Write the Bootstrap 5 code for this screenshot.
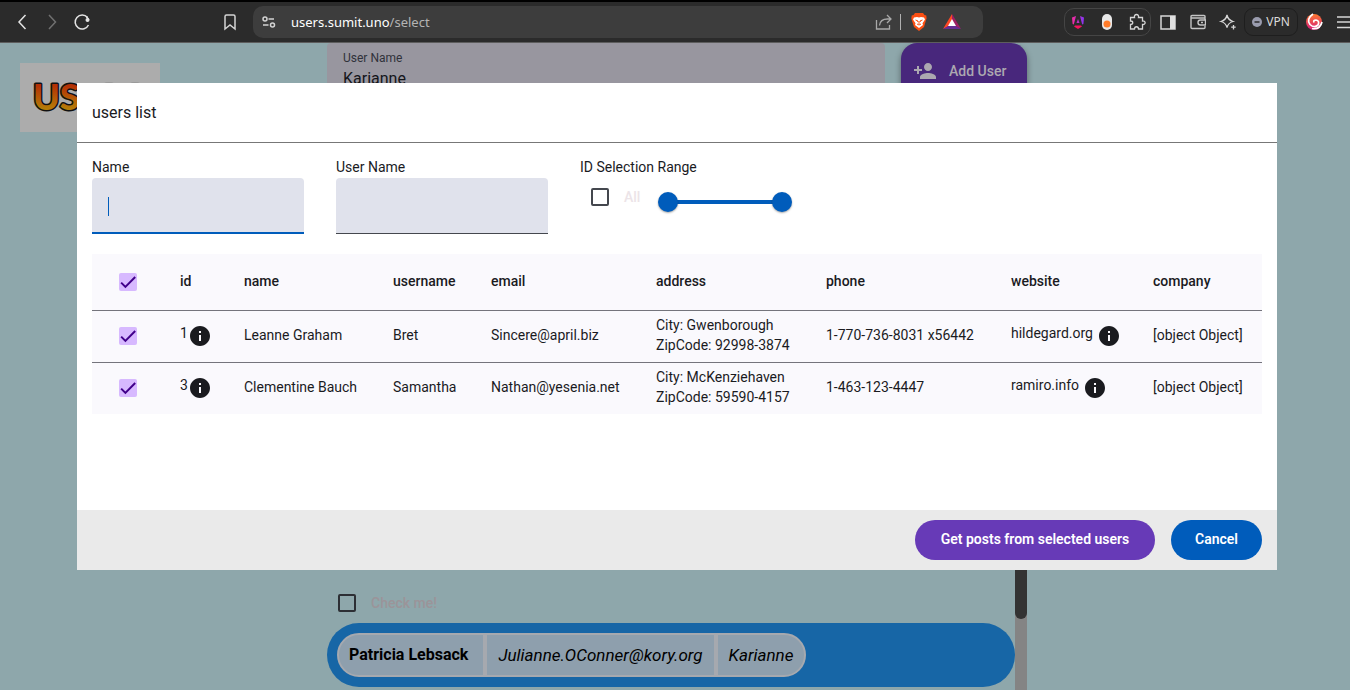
<!DOCTYPE html>
<html lang="en">
<head>
<meta charset="utf-8">
<meta name="viewport" content="width=device-width, initial-scale=1">
<title>users list</title>
<link href="https://cdn.jsdelivr.net/npm/bootstrap@5.3.0/dist/css/bootstrap.min.css" rel="stylesheet">
<style>
  body { font-family: Roboto, "Liberation Sans", sans-serif; font-size: 14px; line-height: 20px; color: #1a1b1f; background: #8ea7ab; }
  svg { display: block; flex: none; }

  /* browser toolbar */
  .toolbar { background: #2b2b2b; border-top: 2px solid #000; border-bottom: 1px solid #5d5d5d; height: 43px; padding-left: 12px; color: #dcdcdc; font-family: "Noto Sans", sans-serif; }
  .tool { border: 0; padding: 0; background: none; color: inherit; flex: none; }
  .bookmark { margin: 0 13px 0 128px; }
  .address { background: #3d3d3d; border-radius: 10px; height: 32px; padding: 0 22px 0 6px; margin-right: 81px; }
  .url { font-size: 13px; color: #b4b4b4; text-decoration: none; }
  .url span { color: #fff; }
  .extensions { border: 1px solid #454545; border-radius: 10px; height: 28px; width: 87px; padding: 0 3px 0 4px; margin-right: 7px; }
  .vpn { border: 1px solid #1e1e1e; border-radius: 9px; height: 28px; width: 54px; font-size: 12px; margin: 0 6px; }
  .menu-btn { margin: 0 -4px 0 8px; }

  /* page behind the dialog */
  .logo-box { width: 140px; height: 69px; margin: 20px 0 0 20px; background: #acacac; }
  .content-col { max-width: 700px; padding: 0; margin-left: 167px; }
  .dim-field { background: #98969f; border-radius: 4px 4px 0 0; height: 56px; padding: 5px 16px; color: #14151a; }
  .dim-field label { font-size: 12px; color: #30323a; }
  .dim-field input { border: 0; background: none; padding: 1px 0 0; font-size: 16px; color: inherit; display: block; }
  .add-user { width: 126px; height: 56px; border-radius: 16px; background: #48277c; color: #aca8b0; font-weight: 500; font-size: 14px; padding: 0 12px; box-shadow: 0 3px 6px rgba(0,0,0,.4); border: 0; }
  .scroll-track { width: 12px; background: #848484; }
  .scroll-thumb { height: 520px; background: #333; border-radius: 6px; }
  .check-dim { margin: 0 0 11px 11px; color: #9b9499; font-weight: 500; }
  .check-dim label { padding-left: 15px; line-height: 18px; }
  .person { background: #1766a6; border-radius: 32px; padding: 10px; margin-bottom: 3px; font-size: 17px; color: #000; }
  .chip-group { border: 2px solid #a6a9af; border-radius: 22px; background: #8e9fad; height: 44px; }
  .chip-group > span { padding: 0 11px; height: 40px; }
  .chip-group > .who { font-size: 16px; padding: 0 15px 0 10px; }
  .chip-group > span + span { border-left: 4px solid #a6a9af; }

  /* dialog */
  .overlay { position: absolute; inset: 0; padding: 40px 0 0 4px; pointer-events: none; }
  .dialog { max-width: 1200px; margin: 0 auto; background: #fff; pointer-events: auto; }
  .dialog-head { padding: 20px 15px 19px; border-bottom: 1px solid #777; }
  .dialog-head h1 { font-size: 16px; line-height: 20px; font-weight: 400; margin: 0; }
  .dialog-body { padding: 14px 15px 96px; }
  .filters { gap: 32px; margin-bottom: 20px; }
  .filter-label { display: block; line-height: 21px; }
  .filter-input { width: 212px; height: 56px; border: 0; border-bottom: 1px solid #44474e; border-radius: 4px 4px 0 0; background: #e0e2ec; padding: 8px 16px; display: block; outline: 0; font-size: 16px; }
  .filter-input.active { border-bottom: 2px solid #005cbb; }
  .text-caret { position: absolute; left: 16px; bottom: 18px; width: 1px; height: 19px; background: #005cbb; }
  .box { width: 18px; height: 18px; border: 2px solid #44474e; border-radius: 2px; margin: 0; appearance: none; display: block; flex: none; background: center / 16px no-repeat; }
  .box.dim { border-color: #2d2f34; }
  .box:checked { border: 0; background-color: #d7b9ff; background-image: url("data:image/svg+xml,%3Csvg xmlns='http://www.w3.org/2000/svg' viewBox='0 0 24 24'%3E%3Cpath d='M1.73 12.91 8.1 19.28 22.79 4.59' fill='none' stroke='%2341008b' stroke-width='3'/%3E%3C/svg%3E"); }
  .all-check { padding: 9px 0 0 11px; }
  .all-check label { color: #ece4e8; font-weight: 500; padding-left: 15px; }
  .dual-range { width: 134px; height: 20px; position: relative; margin: 14px 0 0 18px; }
  .dual-range::before { content: ""; position: absolute; inset: 8px 10px; background: #005cbb; }
  .dual-range input { position: absolute; inset: 0; width: 100%; height: 20px; margin: 0; appearance: none; background: none; pointer-events: none; }
  .dual-range input::-webkit-slider-thumb { appearance: none; width: 20px; height: 20px; border-radius: 50%; background: #005cbb; box-shadow: 0 1px 2px rgba(0,0,0,.35); pointer-events: auto; }
  .user-table { width: 100%; table-layout: fixed; background: #faf9fd; }
  .user-table th { height: 56px; padding: 0 0 2px 16px; font-weight: 500; }
  .user-table td { height: 52px; padding: 0 0 2px 16px; white-space: nowrap; }
  .user-table tr > :first-child { padding: 0 0 0 27px; }
  .user-table tr { border-bottom: 1px solid #74747c; }
  .user-table tbody tr:last-child { border-bottom: 0; }
  .with-info { line-height: 22px; }
  .with-info svg { margin-top: 2px; }
  .dialog-foot { background: #eaeaea; padding: 10px 15px; gap: 16px; }
  .pill { height: 40px; border: 0; border-radius: 20px; color: #fff; font-weight: 600; font-size: 14px; padding: 0 0 2px; }
  .pill-posts { background: #673ab7; width: 240px; }
  .pill-cancel { background: #005cbb; width: 91px; }
</style>
</head>
<body class="d-flex flex-column vh-100 overflow-hidden">

<header class="toolbar d-flex align-items-center overflow-hidden flex-shrink-0">
  <button class="tool" aria-label="Back"><svg width="20" height="20" fill="none" stroke="#e4e4e4" stroke-width="1.5"><path d="M13.500 3 7 10l6.500 7"/></svg></button>
  <button class="tool ms-2 me-2" aria-label="Forward"><svg width="24" height="20" fill="none" stroke="#707070" stroke-width="1.500"><path d="M9 3l6.500 7L9 17"/></svg></button>
  <button class="tool" aria-label="Reload"><svg width="20" height="20" fill="none" stroke="#e4e4e4" stroke-width="1.500"><path d="M16.500 13A7 7 0 1 1 15.500 5.500"/><circle cx="15.500" cy="8" r="2" fill="#e4e4e4" stroke="none"/><path d="M14.500 4.500 16.800 8"/></svg></button>
  <button class="tool bookmark" aria-label="Bookmark"><svg width="20" height="20" fill="none" stroke="#d4d4d4" stroke-width="1.500"><path d="M5 4.500Q5 3 6.500 3h7Q15 3 15 4.500V17l-5-4-5 4z"/></svg></button>
  <div class="address d-flex align-items-center flex-grow-1">
    <svg width="20" height="20" fill="none" stroke="#d4d4d4" stroke-width="1.500"><circle cx="6" cy="7" r="2"/><path d="M9.500 7H15M4 13h5.500"/><circle cx="13.500" cy="13" r="2"/></svg>
    <a class="url flex-grow-1 ps-2 ms-1" href="#"><span>users.sumit.uno</span>/select</a>
    <svg width="20" height="20" fill="none" stroke="#a9a9a9" stroke-width="1.300"><path d="M2.500 8v9h13v-4M5.500 13.500c.5-5 4-6.500 8-6.500H17M13 3l4 4-4 4"/></svg>
    <svg class="mx-1" width="5" height="16"><path d="M2.500 0v16" stroke="#b0b0b0"/></svg>
    <svg class="ms-1" width="16" height="18" viewBox="0 0 16 18"><path fill="#fb4f13" d="m4 0h8l1.500 2 1.800.5.3 3-.8 2.200L13 14l-5 4-5-4L1 7.700.3 5.500l.4-3L2.500 2z"/><path fill="#fff" d="M3 4.500 6 4l2 .5L10 4l3 .5 1 2-2.500 3.700.5 1.800L8 15l-4-3 .5-1.800L2 6.500z"/><path d="m4.500 7 2.500 1-.5 1M11.500 7 9 8l.5 1M8 8v3m-2 0 2 1 2-1" stroke="#fb4f13" fill="none"/></svg>
    <svg class="ms-3" width="18" height="18" viewBox="0 0 18 18"><path fill="#ff4724" d="M9 1 0 16l6-3 3-5z"/><path fill="#9e1f63" d="m9 1 9 15-6-3-3-5z"/><path fill="#662d91" d="m0 16 6-3.500h6L18 16z"/><path fill="#fff" d="m9 6 4 7H5z"/></svg>
  </div>
  <div class="extensions d-flex align-items-center justify-content-between flex-shrink-0">
    <svg width="18" height="18" viewBox="0 0 18 18"><defs><linearGradient id="ng" gradientUnits="userSpaceOnUse" x1="3" y1="0" x2="15" y2="0"><stop stop-color="#f62b9c"/><stop offset="1" stop-color="#8436f5"/></linearGradient></defs><path fill="url(#ng)" d="M3 4.500 7 3 4.800 11.500 3.600 11zM11 3l4 1.500-.6 6.500-1.200.5zM9 6l1.500 4h-3z"/><path fill="#f4125f" d="M6 12.500h6l1 1L9 16l-4-2.500z"/></svg>
    <svg width="10" height="16"><rect width="10" height="16" rx="5" fill="#e8e8e8"/><circle cx="5" cy="10" r="3.500" fill="#ff7b29"/></svg>
    <svg width="20" height="20" fill="none" stroke="#d4d4d4" stroke-width="1.300"><path d="M3.500 5.500h4c-1-4 5-4 4 0h4V9c3.500-.5 3.500 4 0 3.500V17h-4c0-3-4-3-4 0h-4v-4.500c3 0 3-3.500 0-3.500z"/></svg>
  </div>
  <button class="tool" aria-label="Side panel"><svg width="20" height="20"><path d="M3 4h14v13H3z" fill="none" stroke="#d6d6d6" stroke-width="1.500"/><path d="M12 4h5v13h-5z" fill="#e0e0e0"/></svg></button>
  <button class="tool mx-2 px-1" aria-label="Wallet"><svg width="16" height="20" fill="none" stroke="#c4c4c4" stroke-width="1.400"><path d="M15 8V4.500q0-1-1-1H2q-1 0-1 1v11q0 1 1 1h12q1 0 1-1V14M1 6h14M15.500 8h-5Q8 8 8 10.500T10.500 13h5z"/><path d="M11 10.500h2"/></svg></button>
  <button class="tool" aria-label="Assistant"><svg width="20" height="20" fill="none" stroke="#d6d6d6" stroke-width="1.300"><path d="M9 3q1 5 6 6.500-5 1.500-6 6-1-4.500-6-6 5-1.500 6-6.500z"/><path d="M15.500 13v4.500M13.200 15.200h4.500"/></svg></button>
  <button class="tool vpn d-flex align-items-center justify-content-center gap-1" aria-label="VPN"><svg width="10" height="10"><circle cx="5" cy="5" r="5" fill="#9a9cae"/><path d="M2.500 5h5" stroke="#2b2b2b" stroke-width="1.500"/></svg>VPN</button>
  <svg class="me-1" width="20" height="20" viewBox="0 0 20 20"><defs><linearGradient id="sw" x1="0" y1="0" x2="0" y2="1"><stop stop-color="#ff7a2f"/><stop offset="1" stop-color="#d5197d"/></linearGradient></defs><circle cx="10" cy="10" r="8" fill="url(#sw)"/><path d="M9 2Q2 7 6 12.500q4 4 8 .5 2-4-2-5-3 0-2 2.500M18 10q-2 8-10 6.500" fill="none" stroke="#fff" stroke-width="1.700"/></svg>
  <button class="tool menu-btn" aria-label="Menu"><svg width="18" height="20" stroke="#d6d6d6" stroke-width="1.500"><path d="M1 5h16M1 10h16M1 15.500h16"/></svg></button>
</header>

<main class="position-relative flex-grow-1 overflow-hidden d-flex">
  <div class="logo-box flex-shrink-0 overflow-hidden">
    <svg width="140" height="69"><defs><linearGradient id="lg" x1="0" y1="0" x2="0" y2="1"><stop offset=".25" stop-color="#b42f05"/><stop offset=".8" stop-color="#b57d07"/></linearGradient></defs>
      <ellipse cx="89" cy="24" rx="8" ry="5" fill="#999"/><ellipse cx="115" cy="24" rx="8" ry="5" fill="#999"/>
      <text x="13" y="47" font-family="Lato, sans-serif" font-size="36" font-weight="900" fill="url(#lg)" stroke="#111" stroke-width="3" stroke-linejoin="round" paint-order="stroke">US</text></svg>
  </div>
  <div class="content-col d-flex flex-column flex-grow-1">
    <div class="d-flex gap-3">
      <div class="dim-field flex-grow-1"><label class="d-block" for="dimUser">User Name</label><input id="dimUser" type="text" value="Karianne"></div>
      <button class="add-user d-flex align-items-center gap-2"><svg class="me-1" width="24" height="24" viewBox="0 0 24 24" fill="currentColor"><path d="M15 12c2.210 0 4-1.790 4-4s-1.790-4-4-4-4 1.790-4 4 1.790 4 4 4zm-9-2V7H4v3H1v2h3v3h2v-3h3v-2H6zm9 4c-2.670 0-8 1.340-8 4v2h16v-2c0-2.660-5.330-4-8-4z"/></svg>Add User</button>
    </div>
    <div class="d-flex flex-grow-1 overflow-hidden">
      <div class="flex-grow-1 d-flex flex-column justify-content-end">
        <div class="check-dim d-flex align-items-center"><input class="box dim" type="checkbox" id="checkMe"><label for="checkMe">Check me!</label></div>
        <div class="person d-flex">
          <div class="chip-group d-flex overflow-hidden">
            <span class="who d-flex align-items-center fw-bold">Patricia Lebsack</span>
            <span class="d-flex align-items-center fst-italic">Julianne.OConner@kory.org</span>
            <span class="d-flex align-items-center fst-italic">Karianne</span>
          </div>
        </div>
      </div>
      <div class="scroll-track"><div class="scroll-thumb"></div></div>
    </div>
  </div>

  <div class="overlay">
    <section class="dialog" role="dialog" aria-labelledby="dialogTitle">
      <div class="dialog-head"><h1 id="dialogTitle">users list</h1></div>
      <div class="dialog-body">
        <div class="filters d-flex flex-wrap">
          <div class="position-relative"><label class="filter-label" for="fName">Name</label><input class="filter-input active" id="fName" type="text"><span class="text-caret"></span></div>
          <div><label class="filter-label" for="fUser">User Name</label><input class="filter-input" id="fUser" type="text"></div>
          <div>
            <div class="filter-label">ID Selection Range</div>
            <div class="d-flex">
              <div class="all-check d-flex align-items-center align-self-start"><input class="box" type="checkbox" id="allIds"><label for="allIds">All</label></div>
              <div class="dual-range"><input type="range" min="1" max="10" value="1" aria-label="Lowest id"><input type="range" min="1" max="10" value="10" aria-label="Highest id"></div>
            </div>
          </div>
        </div>
        <table class="user-table">
          <colgroup><col width="72"><col width="64"><col width="149"><col width="98"><col width="165"><col width="170"><col width="185"><col width="142"><col></colgroup>
          <thead><tr><th><input class="box" type="checkbox" checked aria-label="Select all"></th><th>id</th><th>name</th><th>username</th><th>email</th><th>address</th><th>phone</th><th>website</th><th>company</th></tr></thead>
          <tbody>
            <tr><td><input class="box" type="checkbox" checked aria-label="Select Leanne Graham"></td>
              <td><div class="with-info d-flex">1<svg width="24" height="24" viewBox="0 0 24 24" fill="currentColor"><path d="M12 2C6.480 2 2 6.480 2 12s4.480 10 10 10 10-4.480 10-10S17.520 2 12 2zm1 15h-2v-6h2v6zm0-8h-2V7h2v2z"/></svg></div></td>
              <td>Leanne Graham</td><td>Bret</td><td>Sincere@april.biz</td><td>City: Gwenborough<br>ZipCode: 92998-3874</td><td>1-770-736-8031 x56442</td>
              <td><div class="with-info d-flex">hildegard.org<svg class="ms-1" width="24" height="24" viewBox="0 0 24 24" fill="currentColor"><path d="M12 2C6.480 2 2 6.480 2 12s4.480 10 10 10 10-4.480 10-10S17.520 2 12 2zm1 15h-2v-6h2v6zm0-8h-2V7h2v2z"/></svg></div></td><td>[object Object]</td></tr>
            <tr><td><input class="box" type="checkbox" checked aria-label="Select Clementine Bauch"></td>
              <td><div class="with-info d-flex">3<svg width="24" height="24" viewBox="0 0 24 24" fill="currentColor"><path d="M12 2C6.480 2 2 6.480 2 12s4.480 10 10 10 10-4.480 10-10S17.520 2 12 2zm1 15h-2v-6h2v6zm0-8h-2V7h2v2z"/></svg></div></td>
              <td>Clementine Bauch</td><td>Samantha</td><td>Nathan@yesenia.net</td><td>City: McKenziehaven<br>ZipCode: 59590-4157</td><td>1-463-123-4447</td>
              <td><div class="with-info d-flex">ramiro.info<svg class="ms-1" width="24" height="24" viewBox="0 0 24 24" fill="currentColor"><path d="M12 2C6.480 2 2 6.480 2 12s4.480 10 10 10 10-4.480 10-10S17.520 2 12 2zm1 15h-2v-6h2v6zm0-8h-2V7h2v2z"/></svg></div></td><td>[object Object]</td></tr>
          </tbody>
        </table>
      </div>
      <div class="dialog-foot d-flex justify-content-end"><button class="pill pill-posts">Get posts from selected users</button><button class="pill pill-cancel">Cancel</button></div>
    </section>
  </div>
</main>
<script src="https://cdn.jsdelivr.net/npm/bootstrap@5.3.0/dist/js/bootstrap.bundle.min.js"></script>
</body>
</html>
